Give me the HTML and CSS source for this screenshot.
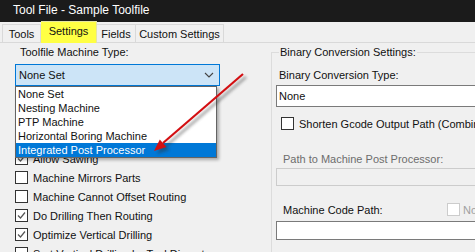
FILE: index.html
```html
<!DOCTYPE html>
<html lang="en">

<head>
    <meta charset="utf-8">
    <title>Tool File - Sample Toolfile</title>
    <link rel="stylesheet" href="styles.css">
</head>

<body>

    <div class="titlebar">Tool File - Sample Toolfile</div>

    <nav class="tabs">
        <div class="tab tab-tools">Tools</div>
        <div class="tab tab-settings valgt">Settings</div>
        <div class="tab tab-fields">Fields</div>
        <div class="tab tab-custom">Custom Settings</div>
    </nav>

    <section class="panel">
        <div class="venstre">
            <p class="label">Toolfile Machine Type:</p>
            <div class="combo aaben">
                <span>None Set</span>
                <svg class="chevron" width="10" height="6" viewBox="0 0 10 6">
                    <polyline points="1,1 5,5 9,1" fill="none" stroke="#444" stroke-width="1.1" />
                </svg>
            </div>

            <ul class="checks">
                <li><span class="box tjek"><svg width="11" height="11" viewBox="0 0 11 11"><polyline points="2,5.5 4.5,8 9,2.5" fill="none" stroke="#555" stroke-width="1.2" /></svg></span>Allow Sawing</li>
                <li><span class="box"></span>Machine Mirrors Parts</li>
                <li><span class="box"></span>Machine Cannot Offset Routing</li>
                <li><span class="box tjek"><svg width="11" height="11" viewBox="0 0 11 11"><polyline points="2,5.5 4.5,8 9,2.5" fill="none" stroke="#555" stroke-width="1.2" /></svg></span>Do Drilling Then Routing</li>
                <li><span class="box tjek"><svg width="11" height="11" viewBox="0 0 11 11"><polyline points="2,5.5 4.5,8 9,2.5" fill="none" stroke="#555" stroke-width="1.2" /></svg></span>Optimize Vertical Drilling</li>
                <li><span class="box"></span>Sort Vertical Drilling by Tool Diameter</li>
            </ul>

            <ul class="dropdown">
                <li>None Set</li>
                <li>Nesting Machine</li>
                <li>PTP Machine</li>
                <li>Horizontal Boring Machine</li>
                <li class="markeret">Integrated Post Processor</li>
            </ul>
        </div>

        <fieldset class="gruppe">
            <legend>Binary Conversion Settings:</legend>
            <p class="label binary-label">Binary Conversion Type:</p>
            <div class="felt combo-hvid">None</div>
            <div class="check-linje"><span class="box"></span>Shorten Gcode Output Path (Combine Files)</div>
            <p class="label slukket">Path to Machine Post Processor:</p>
            <div class="felt deaktiv"></div>
            <div class="kode-linje">
                <span class="label kode-label">Machine Code Path:</span>
                <span class="box graa"></span><span class="slukket-lys">No Output</span>
            </div>
            <div class="felt tekst"></div>
        </fieldset>
    </section>

    <svg class="pil" width="475" height="252" viewBox="0 0 475 252">
        <defs>
            <filter id="sloer" x="-20%" y="-20%" width="140%" height="140%">
                <feGaussianBlur stdDeviation="1.6" />
            </filter>
        </defs>
        <g transform="translate(3,3)" opacity="0.45" filter="url(#sloer)">
            <line x1="243" y1="74" x2="163" y2="143" stroke="#333" stroke-width="2.5" />
            <polygon points="154,151 166.4,147 159.8,139.4" fill="#333" />
        </g>
        <line x1="243" y1="74" x2="163" y2="143" stroke="#d30f12" stroke-width="2.2" />
        <polygon points="154,151 166.4,147 159.8,139.4" fill="#d30f12" />
    </svg>

</body>

</html>
```

FILE: styles.css
```css
body {
    margin: 0;
    width: 475px;
    height: 252px;
    overflow: hidden;
    position: relative;
    background-color: #f0f0f0;
    font-family: "Liberation Sans", Arial, sans-serif;
    font-size: 11px;
    color: #111;
}

.titlebar {
    height: 22px;
    line-height: 20px;
    padding-left: 13px;
    background-color: #1b1b1b;
    color: #fff;
    font-size: 12px;
}

/* faner */

.tabs {
    display: flex;
    align-items: flex-end;
    height: 20px;
    padding-left: 2px;
    border-bottom: 1px solid #d9d9d9;
}

.tab {
    height: 17px;
    line-height: 18px;
    text-align: center;
    border: 1px solid #d9d9d9;
    border-bottom: none;
    background-color: #f0f0f0;
    box-sizing: content-box;
}

.tab-tools {
    width: 37px;
}

.tab-settings {
    width: 55px;
}

.tab-fields {
    width: 38px;
    border-left: none;
}

.tab-custom {
    width: 87px;
    border-left: none;
}

.valgt {
    height: 21px;
    line-height: 19px;
    margin-bottom: -1px;
    background-color: #ffff44;
    border-color: #e6e6a0;
    border-left: none;
    align-self: flex-end;
}

/* indhold */

.panel {
    display: flex;
}

.venstre {
    position: relative;
    width: 256px;
    padding-left: 15px;
    flex-shrink: 0;
}

.label {
    margin: 0;
    line-height: 14px;
}

.venstre > .label {
    margin-top: 2px;
    padding-left: 5px;
}

.combo {
    display: flex;
    align-items: center;
    justify-content: space-between;
    width: 200px;
    height: 20px;
    margin-top: 5px;
    padding-left: 3px;
    box-sizing: content-box;
    background-color: #cce4f7;
    border: 1px solid #0078d7;
}

.chevron {
    margin-right: 5px;
}

.checks {
    list-style: none;
    margin: 63px 0 0;
    padding: 0;
}

.checks li {
    display: flex;
    align-items: center;
    height: 19px;
}

.box {
    display: inline-flex;
    align-items: center;
    justify-content: center;
    width: 11px;
    height: 11px;
    margin-right: 5px;
    border: 1px solid #333;
    background-color: #fff;
    flex-shrink: 0;
}

.dropdown {
    position: absolute;
    left: 15px;
    top: 43px;
    width: 200px;
    margin: 0;
    padding: 0;
    list-style: none;
    background-color: #fff;
    border: 1px solid #646464;
    box-shadow: 2px 2px 3px rgba(0, 0, 0, 0.3);
}

.dropdown li {
    height: 14px;
    line-height: 14px;
    padding-left: 2px;
}

.markeret {
    background-color: #0078d7;
    color: #fff;
}

/* gruppe til højre */

.gruppe {
    width: 260px;
    margin: 2px 0 0;
    padding: 0 0 0 6px;
    border: 1px solid #dcdcdc;
    flex-shrink: 0;
}

.gruppe legend {
    margin-left: 1px;
    padding: 0 1px;
    line-height: 14px;
}

.binary-label {
    margin-top: 9px;
    padding-left: 1px;
}

.felt {
    height: 20px;
    margin-left: -2px;
    border: 1px solid #7a7a7a;
    background-color: #fff;
    box-sizing: border-box;
}

.combo-hvid {
    margin-top: 3px;
    height: 22px;
    line-height: 20px;
    padding-left: 2px;
}

.check-linje {
    display: flex;
    align-items: center;
    height: 13px;
    margin-top: 10px;
    padding-left: 3px;
    white-space: nowrap;
}

.check-linje .box {
    margin-right: 5px;
}

.slukket {
    margin-top: 22px;
    padding-left: 5px;
    color: #6d6d6d;
}

.deaktiv {
    height: 18px;
    margin-top: 2px;
    border-color: #cccccc;
    background-color: #f0f0f0;
}

.kode-linje {
    display: flex;
    align-items: center;
    height: 15px;
    margin-top: 16px;
    padding-left: 5px;
    white-space: nowrap;
}

.kode-label {
    width: 164px;
    flex-shrink: 0;
}

.graa {
    border-color: #cccccc;
    margin-right: 3px;
}

.slukket-lys {
    color: #a0a0a0;
}

.tekst {
    height: 19px;
    margin-top: 4px;
}

.pil {
    position: absolute;
    left: 0;
    top: 0;
    pointer-events: none;
}
```
